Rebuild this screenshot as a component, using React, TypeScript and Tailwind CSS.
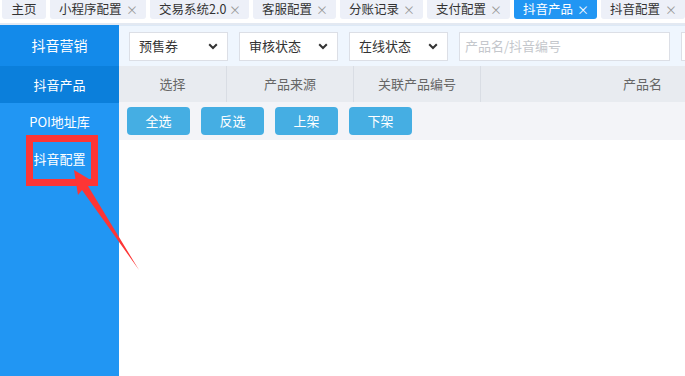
import React from 'react';

const tabs = [
  { name: '主页', w: 'w-[44px]', closable: false },
  { name: '小程序配置', w: 'w-[96px]', closable: true },
  { name: '交易系统2.0', w: 'w-[99px]', closable: true },
  { name: '客服配置', w: 'w-[83px]', closable: true },
  { name: '分账记录', w: 'w-[83px]', closable: true },
  { name: '支付配置', w: 'w-[83px]', closable: true },
  { name: '抖音产品', w: 'w-[83px]', closable: true, active: true },
  { name: '抖音配置', w: 'w-[84px]', closable: true },
];

const menu = [
  { name: '抖音产品', active: true },
  { name: 'POI地址库' },
  { name: '抖音配置' },
];

const selects = ['预售券', '审核状态', '在线状态'];

const columns = [
  { name: '选择', w: 'w-[108px]' },
  { name: '产品来源', w: 'w-[127px]' },
  { name: '关联产品编号', w: 'w-[127px]' },
  { name: '产品名', w: 'w-[324px]' },
];

const actions = ['全选', '反选', '上架', '下架'];

const Chevron = () => (
  <svg width="10" height="7" viewBox="0 0 10 7" className="shrink-0">
    <path d="M1.2 1.2 L5 5 L8.8 1.2" fill="none" stroke="#333" strokeWidth="2" />
  </svg>
);

export default function App() {
  return (
    <div
      className="relative w-[685px] h-[376px] overflow-hidden bg-white flex flex-col text-[13px]"
      style={{ fontFamily: '"Noto Sans CJK SC", "Noto Sans", sans-serif' }}
    >
      {/* tab strip */}
      <div className="h-[25px] shrink-0 border-b-2 border-[#e3e9f2] flex items-start gap-[4px] pl-[2px] whitespace-nowrap text-[12.5px]">
        {tabs.map((t) => (
          <div
            key={t.name}
            className={`${t.w} h-[19px] shrink-0 flex items-center rounded-b-[3px] ${
              t.closable ? 'justify-between pl-[9px] pr-[8px]' : 'justify-center'
            } ${t.active ? 'bg-[#2196f3] text-white' : 'bg-[#edf0f8] text-[#333]'}`}
          >
            <span className="leading-none">{t.name}</span>
            {t.closable && (
              <span className={`text-[12px] leading-none ${t.active ? 'text-white' : 'text-[#999]'}`}>×</span>
            )}
          </div>
        ))}
      </div>

      <div className="flex flex-1 min-h-0">
        {/* sidebar */}
        <aside className="w-[119px] shrink-0 bg-[#2196f3] text-white flex flex-col">
          <div className="h-[41px] flex items-center justify-center bg-[#138aea] text-[14px]">抖音营销</div>
          {menu.map((m) => (
            <div
              key={m.name}
              className={`h-[37px] flex items-center justify-center ${m.active ? 'bg-[#0b7fdb]' : ''}`}
            >
              {m.name}
            </div>
          ))}
        </aside>

        {/* main */}
        <main className="flex-1 min-w-0 flex flex-col overflow-hidden">
          <div className="h-[41px] shrink-0 bg-[#eff6fe] border-t border-[#dde9f6] flex items-center gap-[11px] pl-[10px]">
            {selects.map((s) => (
              <div
                key={s}
                className="w-[99px] h-[29px] shrink-0 bg-white border border-[#dcdfe6] flex items-center justify-between pl-[9px] pr-[9px] text-[#333]"
              >
                <span>{s}</span>
                <Chevron />
              </div>
            ))}
            <div className="w-[211px] h-[29px] shrink-0 bg-white border border-[#dcdfe6] flex items-center pl-[5px] text-[#c4c7cc]">
              产品名/抖音编号
            </div>
            <div className="w-[60px] h-[29px] shrink-0 bg-white border border-[#dcdfe6]" />
          </div>

          <div className="h-[36px] shrink-0 bg-[#e8ebf0] flex text-[#666]">
            {columns.map((c) => (
              <div
                key={c.name}
                className={`${c.w} shrink-0 h-full flex items-center justify-center border-r border-[#d9dde4]`}
              >
                {c.name}
              </div>
            ))}
          </div>

          <div className="h-[38px] shrink-0 bg-[#f3f4f8] flex items-center gap-[11px] pl-[8px]">
            {actions.map((a) => (
              <div
                key={a}
                className="w-[63px] h-[28px] rounded-[4px] bg-[#45aee3] text-white flex items-center justify-center"
              >
                {a}
              </div>
            ))}
          </div>

          <div className="flex-1 bg-white" />
        </main>
      </div>

      {/* red annotation */}
      <svg className="absolute inset-0 pointer-events-none" width="685" height="376" viewBox="0 0 685 376">
        <rect x="29.5" y="138.5" width="65" height="44" fill="none" stroke="#fd3535" strokeWidth="7" />
        <polygon points="74,170 94,182 88,186 139,270 82,190 78,195" fill="#fd3535" />
      </svg>
    </div>
  );
}
